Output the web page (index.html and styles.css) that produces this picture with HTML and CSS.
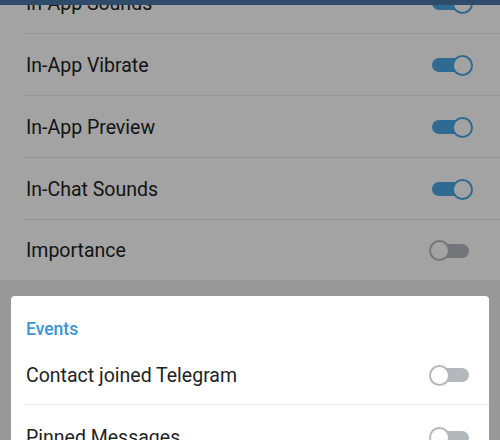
FILE: index.html
```html
<!DOCTYPE html>
<html lang="en">
<head>
    <meta charset="UTF-8">
    <meta name="viewport" content="width=device-width, initial-scale=1.0">
    <title>Notifications and Sounds</title>
    <link rel="stylesheet" href="styles.css">
</head>
<body>
    <div class="action-bar"></div>

    <ul class="settings">
        <li class="row"><span>In-App Sounds</span><span class="switch on"></span></li>
        <li class="row"><span>In-App Vibrate</span><span class="switch on"></span></li>
        <li class="row"><span>In-App Preview</span><span class="switch on"></span></li>
        <li class="row"><span>In-Chat Sounds</span><span class="switch on"></span></li>
        <li class="row"><span>Importance</span><span class="switch"></span></li>
    </ul>

    <div class="scrim"></div>

    <div class="sheet">
        <div class="sheet-header">Events</div>
        <ul class="sheet-list">
            <li class="row"><span>Contact joined Telegram</span><span class="switch"></span></li>
            <li class="row"><span>Pinned Messages</span><span class="switch"></span></li>
        </ul>
    </div>
</body>
</html>
```

FILE: styles.css
```css
html, body {
    height: 100%;
}
body {
    margin: 0;
    font-family: Roboto, "Noto Sans", sans-serif;
    background-color: #f0f0f0;
    color: #222;
    overflow: hidden;
}
ul {
    list-style-type: none;
    margin: 0;
    padding: 0;
}
.action-bar {
    position: absolute;
    top: 0;
    left: 0;
    right: 0;
    height: 5px;
    background-color: #4878a4;
    z-index: 1;
}
.settings {
    background: #fff;
    margin-top: -28px;
}
.row {
    display: flex;
    align-items: center;
    justify-content: space-between;
    height: 62px;
    box-sizing: border-box;
    padding-top: 1px;
    padding-left: 2px;
    padding-right: 31px;
    margin-left: 24px;
    font-size: 19.5px;
    border-bottom: 1px solid #e9e9e9;
}
.row:last-child {
    border-bottom: none;
}
.settings .row:last-child {
    height: 60px;
}
.switch {
    position: relative;
    width: 37px;
    height: 14px;
    border-radius: 7px;
    background-color: #b3b8bd;
}
.switch::after {
    content: "";
    position: absolute;
    top: -3.5px;
    left: -3.5px;
    width: 21px;
    height: 21px;
    box-sizing: border-box;
    border-radius: 50%;
    border: 2.5px solid #b3b8bd;
    background: #fff;
}
.switch.on {
    background-color: #4aa6e5;
}
.switch.on::after {
    left: auto;
    right: -3.5px;
    border-color: #4aa6e5;
}
.scrim {
    position: fixed;
    top: 0;
    left: 0;
    right: 0;
    bottom: 0;
    background: rgba(0, 0, 0, 0.36);
    z-index: 2;
}
.sheet {
    position: relative;
    z-index: 3;
    margin: 16px 11px 0;
    background: #fff;
    border-radius: 4px 4px 0 0;
}
.sheet-header {
    padding: 23px 0 4px 15px;
    font-size: 17.5px;
    line-height: 20px;
    font-weight: 500;
    color: #3a95d5;
}
.sheet-list .row {
    margin-left: 13px;
    padding-top: 3px;
    padding-right: 20px;
}
```
